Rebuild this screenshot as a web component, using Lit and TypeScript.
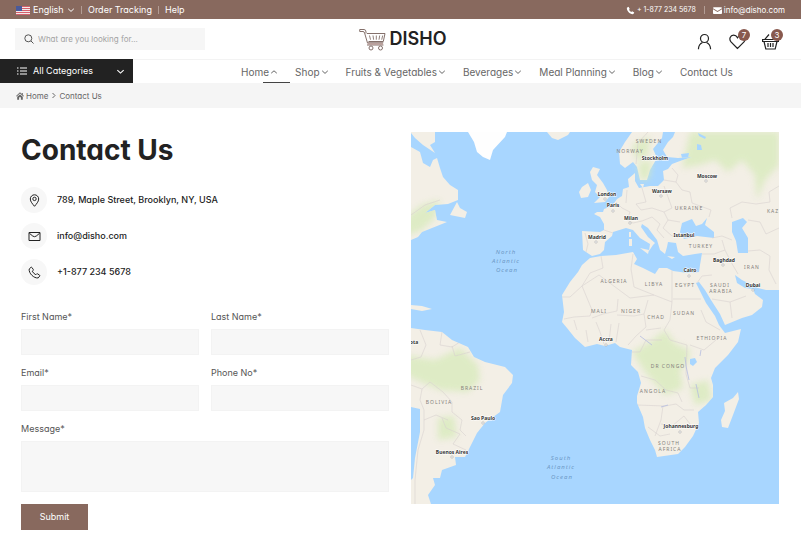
import { LitElement, html, svg, css } from "lit";
import { customElement } from "lit/decorators.js";

const chevron = (up = false) => html`
  <svg class="chev" viewBox="0 0 8 8" aria-hidden="true">
    <path d=${up ? "M1.2 5.2 4 2.8l2.8 2.4" : "M1.2 2.8 4 5.4l2.8-2.6"} />
  </svg>`;

type Label = [string, number, number];

const CITIES: Label[] = [
  ["Stockholm", 655, 160], ["Moscow", 707, 178], ["Warsaw", 662, 193],
  ["London", 607, 196], ["Paris", 613, 207], ["Milan", 631, 220],
  ["Istanbul", 684, 237], ["Madrid", 597, 239], ["Baghdad", 724, 262],
  ["Cairo", 690, 272], ["Dubai", 753, 287], ["Accra", 606, 341],
  ["Sao Paulo", 483, 420], ["Buenos Aires", 452, 454],
  ["Johannesburg", 681, 428],
];

const COUNTRIES: Label[] = [
  ["SWEDEN", 649, 143], ["NORWAY", 630, 153], ["UKRAINE", 689, 210],
  ["TURKEY", 701, 248], ["IRAN", 752, 269], ["ALGERIA", 614, 283],
  ["LIBYA", 654, 286], ["EGYPT", 685, 287], ["SAUDI", 720, 287],
  ["ARABIA", 721, 293], ["MALI", 599, 313], ["NIGER", 631, 313],
  ["CHAD", 656, 319], ["SUDAN", 684, 315], ["ETHIOPIA", 712, 340],
  ["DR CONGO", 668, 368], ["ANGOLA", 653, 393], ["SOUTH", 669, 445],
  ["AFRICA", 670, 451], ["BRAZIL", 472, 390], ["BOLIVIA", 439, 404],
  ["KAZ", 773, 213],
];

const OCEANS: Label[] = [
  ["North", 506, 254], ["Atlantic", 506, 263], ["Ocean", 507, 272],
  ["South", 561, 460], ["Atlantic", 561, 469], ["Ocean", 562, 479],
];

const DOTS: [number, number][] = [
  [706, 181], [661, 196], [605, 199], [613, 211], [630, 223], [596, 242],
  [723, 265], [689, 276], [753, 290], [606, 345], [483, 423], [452, 457],
  [680, 432],
];

@customElement("world-map")
class WorldMap extends LitElement {
  static styles = css`
    :host { display: block; }
    svg { display: block; width: 100%; height: auto; background: #a8d6ff; }
    text { font-family: "Noto Sans", "Open Sans", sans-serif; text-anchor: middle; }
    .land { fill: #f3efe6; }
    .ice { fill: #fefefe; }
    .sea { fill: #a8d6ff; }
    .green { fill: #d7eaba; opacity: 0.75; filter: url(#soft); }
    .border { fill: none; stroke: #d9d2d0; stroke-width: 0.6; }
    .river { fill: none; stroke: #b5bde0; stroke-width: 0.8; }
    .city { font-size: 5px; font-weight: 700; fill: #333; stroke: #fff; stroke-width: 1; paint-order: stroke; }
    .country { font-size: 5px; letter-spacing: 1px; fill: #84817c; }
    .ocean { font-size: 6px; letter-spacing: 1px; font-style: italic; fill: #6d98c6; }
    .dot { fill: #fff; stroke: #999; stroke-width: 0.5; }
  `;

  render() {
    return html`
      <svg viewBox="411 132 368 372" role="img" aria-label="Map of the Atlantic, Europe and Africa">
        <defs>
          <filter id="soft" x="-20%" y="-20%" width="140%" height="140%"><feGaussianBlur stdDeviation="3" /></filter>
          <clipPath id="ground">
            <path d="M582 231 600 232 604 230 604 224 600 217 594 214 597 212 603 212 604 209 612 206 617 199 622 196 623 189 629 187 628 179 635 173 635 181 639 188 650 186 658 186 664 180 663 171 668 169 672 164 680 161 692 157 678 158 667 157 663 150 668 142 673 137 675 132H779V290L766 290 758 288 752 285 742 280 735 275 737 283 745 288 753 289 755 294 763 300 762 307 752 315 742 318 725 325 720 314 711 300 705 290 699 282 696 283 706 303 715 316 719 325 725 333 741 329 738 342 728 355 715 368 711 378 713 385 713 397 706 405 698 412 699 423 693 436 685 447 678 454 664 456 657 457 655 450 650 440 645 428 643 417 637 403 637 396 641 383 638 372 631 365 632 350 620 347 615 343 605 346 597 344 585 347 575 338 567 328 562 322 564 312 562 295 570 282 578 272 582 265 590 258 601 256 616 255 633 252 637 259 634 264 643 268 655 274 659 268 667 268 673 271 688 273 699 272 700 265 702 253 695 254 683 256 678 252 676 243 668 242 667 247 665 254 660 250 657 240 648 228 642 224 641 227 648 237 655 243 653 245 649 251 650 244 640 238 633 230 626 228 613 232 612 236 605 242 604 250 600 254 592 256 583 250Z" />
          </clipPath>
          <clipPath id="newworld">
            <path d="M411 147 420 152 423 163 430 167 433 160 437 158 440 168 443 177 450 185 458 190 458 200 448 204 435 205 425 213 435 210 437 220 447 222 432 228 422 232 418 237 411 240ZM411 328 425 330 442 332 452 340 468 347 474 357 485 362 505 367 513 375 512 383 503 395 500 412 485 423 477 433 470 447 465 457 455 457 456 465 442 470 440 478 433 478 435 485 428 495 431 504H411Z" />
          </clipPath>
        </defs>

        <g clip-path="url(#ground)">
          <rect class="land" x="550" y="132" width="229" height="372" />
          <path class="green" d="M690 132H779V165L765 180 757 200 755 175 742 160 728 172 715 160 700 165 682 168ZM632 352 650 342 665 330 676 344 690 350 688 362 680 370 683 388 665 395 645 372ZM690 385 708 380 712 400 695 405Z" />
          <path class="sea" d="M682 223 692 219 696 226 702 224 707 218 705 225 714 232 714 238 697 236 684 239 680 232ZM732 222 743 218 747 222 742 228 748 238 748 253 738 253 736 241 732 232ZM690 359 695 358 697 362 693 366 690 364ZM697 144 701 145 702 150 697 150ZM681 154 689 153 688 158 682 158ZM698 133 706 137 705 139 699 136Z" />
          <path class="border" d="M585 233 588 244 586 252M604 230 613 233M616 202 622 208 630 212 627 220 633 223 642 221 652 217M627 190 626 203M642 188 646 202 636 204 641 210 652 208 664 212 672 208 668 197 664 186M664 180 676 182 682 190 690 192 692 203 711 210 709 217M672 168 678 175 676 182M652 217 660 224 657 230 664 238M664 212 668 220 680 222M668 220 663 228 672 236 678 236M712 238 722 236 732 240M722 240 725 250 714 254 702 254M725 250 731 262 738 274M748 251 760 250 770 256 769 270 776 284M732 218 730 208 742 202 756 204 770 202 769 192 779 186M748 220 760 222 766 234 779 228M560 297 570 297 582 286 599 275 630 298 654 295 672 302 672 268M601 256 603 268 590 273 582 286M633 254 631 269 634 287 654 295M582 286 592 310 590 316 574 317 564 319M673 299H701M592 318 603 314 617 311 618 299M617 315 634 316 644 314 648 300M672 302 670 320 664 330 670 340 687 345M644 314 646 327 636 336 628 345M574 320 577 330M586 330 588 342M596 322 600 332 604 344M611 324 609 342M619 323 616 342M646 330 661 328M632 352 640 352 646 340 662 340M690 345 704 350 716 340M687 345 686 374 690 388 699 388M641 376 655 380 666 390 678 393 682 402M637 405 665 406 676 404 684 410 694 410M663 406 661 420 655 436M661 424 672 426 684 416 690 424M697 283 702 276 712 275M712 299 730 302 746 296M730 302 732 318M701 310 706 322 720 330M648 427 660 436 670 434" />
          <path class="river" d="M685 357 686 366 689 380M696 384 699 398M668 405 661 407M640 336 652 345M701 350 700 356" />
        </g>

        <path class="land" d="M632 132 625 142 619 152 620 164 625 168 633 162 637 167 640 180 647 180 650 170 657 158 653 149 662 138 663 132Z" />
        <path class="green" d="M638 163 652 160 649 179 640 180ZM632 145 650 136 648 156 636 160Z" />
        <path class="border" d="M648 132 638 143 636 164" />
        <path class="land" d="M593 167 600 169 597 175 603 183 607 190 609 197 605 202 594 203 600 197 595 192 597 185 592 180 590 172ZM582 187 588 183 591 190 588 197 581 198 579 192ZM629 239 632 239 632 246 629 246ZM629 232 631 232 631 237 629 237ZM640 248 649 250 648 254ZM640 184 644 184 643 188ZM667 256 675 257 672 259ZM738 392 739 399 733 415 728 428 722 427 721 420 725 411 724 403 733 398ZM547 132 552 138 558 140 568 135 570 132ZM411 133 415 138 423 145 435 153 430 145 435 142V132H411ZM457 202 460 208 467 212 465 218 450 215ZM411 305 422 306 432 309 422 311 411 309Z" />
        <path class="ice" d="M468 132 474 142 477 152 483 157 490 160 493 150 505 137 507 132Z" />

        <g clip-path="url(#newworld)">
          <rect class="land" x="411" y="132" width="110" height="372" />
          <path class="green" d="M405 218 422 205 440 200 435 218 422 230 405 236ZM405 355 435 360 460 348 478 365 480 380 468 392 440 390 405 375ZM438 418 454 416 457 437 438 440Z" />
          <path class="sea" d="M411 407 420 409 420 432 415 458 413 478 411 480Z" />
          <path class="border" d="M411 215 425 205 440 200M420 330 426 345 421 357 411 360M442 332 440 345 452 347 460 342M452 346 455 356 470 352M411 385 422 389 430 382 443 392 452 402 452 412 462 420 460 430 466 436M422 389 420 400 424 410 424 430 418 450 415 480 415 504M424 420 436 415 448 420M442 418 446 428 460 434 453 444 466 450" />
        </g>

        ${DOTS.map(([x, y]) => svg`<circle class="dot" cx=${x} cy=${y} r="1.2" />`)}
        ${COUNTRIES.map(([t, x, y]) => svg`<text class="country" x=${x} y=${y}>${t}</text>`)}
        ${OCEANS.map(([t, x, y]) => svg`<text class="ocean" x=${x} y=${y}>${t}</text>`)}
        ${CITIES.map(([t, x, y]) => svg`<text class="city" x=${x} y=${y}>${t}</text>`)}
        <text class="city" x="414" y="344">ota</text>
      </svg>`;
  }
}

const NAV = [
  { text: "Home", menu: true, current: true },
  { text: "Shop", menu: true },
  { text: "Fruits & Vegetables", menu: true },
  { text: "Beverages", menu: true },
  { text: "Meal Planning", menu: true },
  { text: "Blog", menu: true },
  { text: "Contact Us", menu: false },
];

@customElement("app-root")
class AppRoot extends LitElement {
  static styles = css`
    :host {
      display: block;
      background: #fff;
      color: #222;
      font-family: Inter, "Open Sans", sans-serif;
      font-feature-settings: "cv11" 1;
      font-size: 9px;
      line-height: 12px;
    }
    * { box-sizing: border-box; }
    a { color: inherit; text-decoration: none; }
    button, input, textarea, select {
      font: inherit; font-feature-settings: inherit; color: inherit;
      border: 0; border-radius: 0; margin: 0; padding: 0; background: none;
    }
    svg { display: block; flex: none; fill: none; stroke: currentColor; }
    .chev { width: 8px; height: 8px; }
    .solid { fill: currentColor; stroke: none; }

    .top {
      display: flex; align-items: center; justify-content: space-between;
      height: 19px; padding: 1px 16px 0; background: #88695e; color: #fff;
    }
    .group { display: flex; align-items: center; gap: 6px; }
    .contact { gap: 8px; font-size: 8px; }
    .rule { width: 1px; height: 8px; background: #b39d95; }
    .lang { display: flex; align-items: center; gap: 3px; }
    .lang select { appearance: none; }
    .lang option { color: #222; }
    .flag { width: 14px; height: 9px; stroke: none; }
    .mini { display: flex; align-items: center; gap: 2px; }
    .mini svg { width: 9px; height: 9px; }
    .phone { font-size: 7px; }

    .header {
      display: grid; grid-template-columns: 1fr auto 1fr; align-items: center;
      height: 40px; padding: 0 15px;
    }
    .search {
      display: flex; align-items: center; gap: 4px; width: 190px; height: 22px;
      padding: 0 9px; background: #f6f6f6; color: #555;
    }
    .search svg { width: 10px; height: 10px; }
    .search input { flex: 1; min-width: 0; font-size: 8px; outline: none; }
    .search input::placeholder { color: #a3a3a3; opacity: 1; }
    .logo {
      display: flex; align-items: center; gap: 4px; padding-left: 4px;
      font-size: 18px; line-height: 24px; font-weight: 600;
    }
    .logo svg { width: 27px; height: 23px; color: #84706b; }
    .tools { display: flex; justify-content: flex-end; gap: 16px; padding: 4px 7px 0 0; }
    .tool { position: relative; display: block; }
    .tool svg { width: 17px; height: 17px; }
    .badge {
      position: absolute; top: -4px; right: -4px; width: 12px; height: 12px;
      border-radius: 50%; background: #88594e; color: #fff;
      font-size: 8px; line-height: 12px; text-align: center;
    }

    .bar { display: flex; height: 24px; }
    .cats {
      display: flex; align-items: center; gap: 6px; width: 133px; padding: 0 8px 0 17px;
      background: #222; color: #fff; text-align: left;
    }
    .cats svg:first-child { width: 10px; height: 8px; }
    .cats .chev { width: 9px; height: 9px; }
    .grow { flex: 1; }
    .menu {
      flex: 1; display: flex; justify-content: center; gap: 17px;
      padding-left: 40px; border-top: 1px solid #f3f3f3; color: #666; font-size: 10px;
    }
    .item { position: relative; display: flex; align-items: center; gap: 1px; white-space: nowrap; }
    .current::after {
      content: ""; position: absolute; bottom: 0; left: 22px; width: 27px; height: 1px; background: #444;
    }
    .crumbs {
      display: flex; align-items: center; gap: 2px; height: 25px; padding: 0 16px;
      background: #f5f5f5; color: #666; font-size: 8px;
    }
    .crumb { display: flex; align-items: center; gap: 2px; }
    .crumb svg { width: 8px; height: 8px; }
    .crumbs > svg { width: 7px; height: 7px; }

    .main {
      display: grid; grid-template-columns: 1fr 1fr; gap: 22px; align-items: start;
      padding: 24px 22px 22px 21px;
    }
    h1 { margin: 0; font-size: 28px; line-height: 36px; font-weight: 700; }
    .contacts {
      display: grid; gap: 10px; margin: 19px 0 26px; padding: 0; list-style: none;
      font-weight: 500;
    }
    .contacts li { display: flex; align-items: center; gap: 10px; }
    .disc {
      display: grid; place-items: center; width: 26px; height: 26px;
      border-radius: 50%; background: #f7f7f7;
    }
    .disc svg { width: 13px; height: 13px; }
    .form { display: grid; grid-template-columns: 1fr 1fr; gap: 12px; }
    .field { display: grid; gap: 6px; color: #555; }
    .field input, .field textarea {
      display: block; width: 100%; height: 26px; padding: 4px 8px;
      border: 1px solid #f3f3f3; background: #f7f7f7; resize: none;
    }
    .field textarea { height: 51px; }
    .wide { grid-column: 1 / -1; }
    .submit { justify-self: start; width: 67px; height: 26px; background: #88695e; color: #fff; }
  `;

  render() {
    return html`
      <div class="top">
        <div class="group">
          <label class="lang">
            <svg class="flag" viewBox="0 0 14 9" aria-hidden="true">
              <path fill="#f3e9ea" d="M0 0h14v9H0z" />
              <path stroke="#d4606c" d="M0 .5h14M0 2.5h14M0 4.5h14M0 6.5h14M0 8.5h14" />
              <path fill="#4a5a9a" d="M0 0h6v5H0z" />
            </svg>
            <select aria-label="Language"><option>English</option></select>
            ${chevron()}
          </label>
          <span class="rule"></span>
          <a href="#tracking">Order Tracking</a>
          <span class="rule"></span>
          <a href="#help">Help</a>
        </div>
        <div class="group contact">
          <a class="mini phone" href="tel:+18772345678">
            <svg class="solid" viewBox="0 0 10 10" aria-hidden="true"><path d="M1 2 2.8.8 4.2 3.2 3.3 4.2C3.8 5.3 4.7 6.2 5.8 6.7L6.8 5.8 9.2 7.2 8.2 9C4.5 9.6.5 5.6 1 2Z" /></svg>
            + 1-877 234 5678
          </a>
          <span class="rule"></span>
          <a class="mini" href="mailto:info@disho.com">
            <svg class="solid" viewBox="0 0 10 10" aria-hidden="true"><path d="M1 1.5h8q1 0 1 1L5 5.6 0 2.5q0-1 1-1ZM0 3.7 5 6.8l5-3.1V8q0 .9-1 .9H1Q0 8.9 0 8Z" /></svg>
            info@disho.com
          </a>
        </div>
      </div>

      <header class="header">
        <label class="search">
          <svg viewBox="0 0 10 10" aria-hidden="true"><circle cx="4.3" cy="4.3" r="3.5" /><path d="m7 7 2.5 2.5" /></svg>
          <input type="search" aria-label="Search" placeholder="What are you looking for..." />
        </label>
        <a class="logo" href="#home">
          <svg viewBox="0 0 27 23" aria-hidden="true">
            <path stroke-width="1" d="M7 5.5V4Q7 1.500 5 1.500H.7v2H4Q5.200 3.500 5.600 5L8.500 15M8 5.500h18L24.300 13.500H9.500M8.500 14.800h15.800M8 17h16.500" />
            <path stroke-width="2" stroke="#b9a09c" d="M8.5 15.9h15.5" />
            <path stroke-width=".9" d="m10.5 7.5 1 4.2M14 7.500l.6 4.200M17.300 7.500v4.200M20.700 7.500l-.7 4.200M23.700 7.500l-1 4.200" />
            <circle cx="12" cy="20" r="2" /><circle cx="21.5" cy="20" r="2" />
          </svg>
          DISHO
        </a>
        <div class="tools">
          <a class="tool" href="#account" aria-label="Account">
            <svg viewBox="0 0 17 17" stroke-width="1.2" aria-hidden="true"><circle cx="8.5" cy="5.5" r="4" /><path d="M2.5 16.200v-1q.4-4 4-5.700M14.500 16.200v-1q-.4-4-4-5.700" /></svg>
          </a>
          <a class="tool" href="#wishlist" aria-label="Wishlist">
            <svg viewBox="0 0 17 17" stroke-width="1.2" aria-hidden="true"><path d="M8.5 15.500 2 8.900C-.3 6 1.200 2.200 4.600 2.200c1.800 0 3.100 1 3.900 2.500.8-1.500 2.100-2.500 3.900-2.500 3.400 0 4.900 3.800 2.600 6.700Z" /></svg>
            <span class="badge">7</span>
          </a>
          <a class="tool" href="#basket" aria-label="Basket">
            <svg viewBox="0 0 17 17" stroke-width="1.2" aria-hidden="true"><path d="M.6 6.500h15.800v2H.6ZM2 8.500 3.800 16h9.400L15 8.500M2.800 6.300 7 1.500M14.200 6.300 10 1.500M6 10v4M8.500 10v4M11 10v4" /></svg>
            <span class="badge">3</span>
          </a>
        </div>
      </header>

      <div class="bar">
        <button class="cats" type="button" aria-haspopup="true">
          <svg viewBox="0 0 10 8" aria-hidden="true"><path d="M0 1h1.500M0 4h1.500M0 7h1.500M3 1h7M3 4h7M3 7h7" /></svg>
          <span class="grow">All Categories</span>
          ${chevron()}
        </button>
        <nav class="menu" aria-label="Main">
          ${NAV.map((n) => html`
            <a class=${n.current ? "item current" : "item"} href="#${n.text}">${n.text} ${n.menu ? chevron(n.current) : ""}</a>`)}
        </nav>
      </div>

      <nav class="crumbs" aria-label="Breadcrumb">
        <a class="crumb" href="#home">
          <svg class="solid" viewBox="0 0 8 8" aria-hidden="true"><path d="M4 .3 5.800 1.900V1h1v1.800L8 4l-.6.6L4 1.600.6 4.600 0 4ZM1.200 4.800 4 2.400l2.800 2.400v3H4.900V5.300H3.100v2.500H1.200Z" /></svg>
          Home
        </a>
        <svg viewBox="0 0 7 7" aria-hidden="true"><path d="m2.500 1 2.500 2.500L2.500 6" /></svg>
        <a href="#contact">Contact Us</a>
      </nav>

      <main class="main">
        <section>
          <h1>Contact Us</h1>
          <ul class="contacts">
            <li>
              <span class="disc"><svg viewBox="0 0 13 13" aria-hidden="true"><path d="M6.500 12.300C4.600 10 2.300 7.600 2.300 5a4.200 4.200 0 0 1 8.400 0c0 2.600-2.300 5-4.200 7.300Z" /><circle cx="6.5" cy="4.9" r="1.7" /></svg></span>
              789, Maple Street, Brooklyn, NY, USA
            </li>
            <li>
              <span class="disc"><svg viewBox="0 0 13 13" aria-hidden="true"><path d="M1 2.500h11v8H1ZM1.300 3.200l3.500 2.900q1.700 1.200 3.400 0l3.500-2.900" /></svg></span>
              <a href="mailto:info@disho.com">info@disho.com</a>
            </li>
            <li>
              <span class="disc"><svg viewBox="0 0 13 13" aria-hidden="true"><path d="M1.200 3 3 1.300q.5-.3.9.2l1.400 2q.2.500-.2.900l-.8.800Q5.500 7.600 7.800 8.700l.8-.8q.4-.4.900-.1l2.100 1.400q.4.400.1.900L10.200 11.900C6 12.600.5 7.200 1.200 3Z" /></svg></span>
              <a href="tel:+18772345678">+1-877 234 5678</a>
            </li>
          </ul>
          <form class="form">
            <label class="field">First Name*<input type="text" /></label>
            <label class="field">Last Name*<input type="text" /></label>
            <label class="field">Email*<input type="email" /></label>
            <label class="field">Phone No*<input type="tel" /></label>
            <label class="field wide">Message*<textarea></textarea></label>
            <button class="submit" type="submit">Submit</button>
          </form>
        </section>
        <world-map></world-map>
      </main>
    `;
  }
}
